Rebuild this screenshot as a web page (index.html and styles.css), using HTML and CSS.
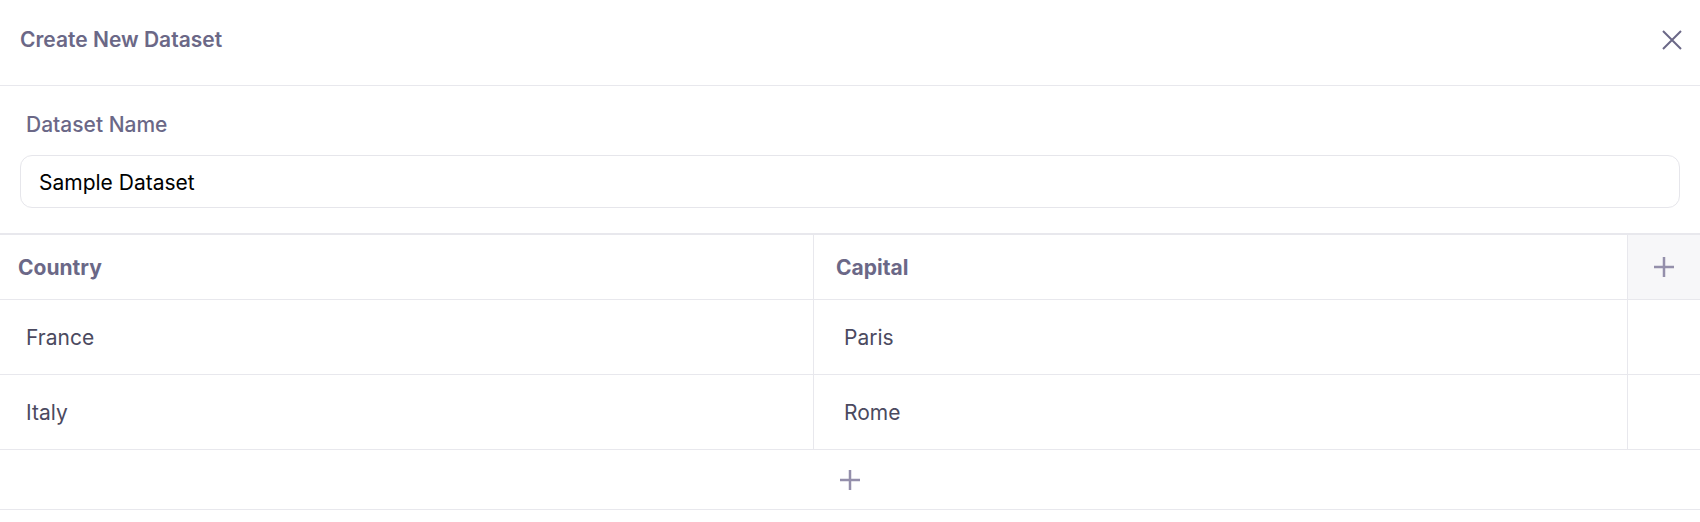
FILE: index.html
```html
<!DOCTYPE html>
<html lang="en">
<head>
<meta charset="utf-8">
<title>Create New Dataset</title>
<link rel="stylesheet" href="styles.css">
</head>
<body>
<div class="dialog">
  <header class="dialog-header">
    <h1 class="dialog-title">Create New Dataset</h1>
    <button class="close-btn" aria-label="Close">
      <svg width="20" height="20" viewBox="0 0 20 20"><path d="M1 1L19 19M19 1L1 19" stroke="#6b6887" stroke-width="2" fill="none" stroke-linecap="butt"/></svg>
    </button>
  </header>
  <section class="form-section">
    <label class="field-label" for="ds-name">Dataset Name</label>
    <input id="ds-name" class="text-input" type="text" value="Sample Dataset">
  </section>
  <div class="grid">
    <div class="cell head">Country</div>
    <div class="cell head col2">Capital</div>
    <div class="cell head add-col">
      <svg width="22" height="22" viewBox="0 0 22 22"><path d="M11 1V21M1 11H21" stroke="#948fab" stroke-width="2.5" fill="none"/></svg>
    </div>
    <div class="cell body">France</div>
    <div class="cell body col2">Paris</div>
    <div class="cell body last"></div>
    <div class="cell body">Italy</div>
    <div class="cell body col2">Rome</div>
    <div class="cell body last"></div>
    <div class="add-row">
      <svg width="22" height="22" viewBox="0 0 22 22"><path d="M11 1V21M1 11H21" stroke="#948fab" stroke-width="2.5" fill="none"/></svg>
    </div>
  </div>
</div>
</body>
</html>
```
FILE: styles.css
```css
* { box-sizing: border-box; }
html, body { margin: 0; padding: 0; background: #ffffff; }
body { font-family: Inter, "Noto Sans", sans-serif; }

.dialog { width: 1700px; }

.dialog-header {
  height: 86px;
  border-bottom: 1px solid #e8e8ed;
  display: flex;
  align-items: center;
  justify-content: space-between;
  padding: 0 18px 6px 20px;
}
.dialog-title {
  margin: 0;
  font-size: 21px;
  font-weight: 600;
  color: #6b6887;
}
.close-btn {
  border: 0;
  background: none;
  padding: 0;
  width: 20px;
  height: 20px;
  display: flex;
}

.form-section {
  padding: 24px 20px 25px 20px;
  border-bottom: 2px solid #e8e8ed;
  display: flex;
  flex-direction: column;
}
.field-label {
  font-size: 21px;
  font-weight: 500;
  color: #6b6887;
  padding-left: 6px;
  line-height: 30px;
  margin-bottom: 15px;
}
.text-input {
  height: 53px;
  border: 1px solid #e6e6eb;
  border-radius: 12px;
  padding: 2px 18px 0 18px;
  font-family: Inter, "Noto Sans", sans-serif;
  font-size: 21px;
  color: #000;
  outline: none;
}

.grid {
  display: grid;
  grid-template-columns: 1fr 1fr 72px;
}
.cell {
  border-bottom: 1px solid #e8e8ed;
  border-right: 1px solid #e8e8ed;
  display: flex;
  align-items: center;
  font-size: 21px;
}
.cell.head {
  height: 65px;
  padding-left: 18px;
  font-weight: 700;
  color: #6b6887;
}
.cell.head.col2 { padding-left: 22px; }
.cell.head.add-col {
  border-right: 0;
  background: #f7f7f9;
  padding-left: 0;
  justify-content: center;
}
.cell.body {
  height: 75px;
  padding-left: 26px;
  color: #4b4a5f;
}
.cell.body.col2 { padding-left: 30px; }
.cell.body.last { border-right: 0; }
.add-row {
  grid-column: 1 / -1;
  height: 60px;
  border-bottom: 1px solid #e8e8ed;
  display: flex;
  align-items: center;
  justify-content: center;
}
```
